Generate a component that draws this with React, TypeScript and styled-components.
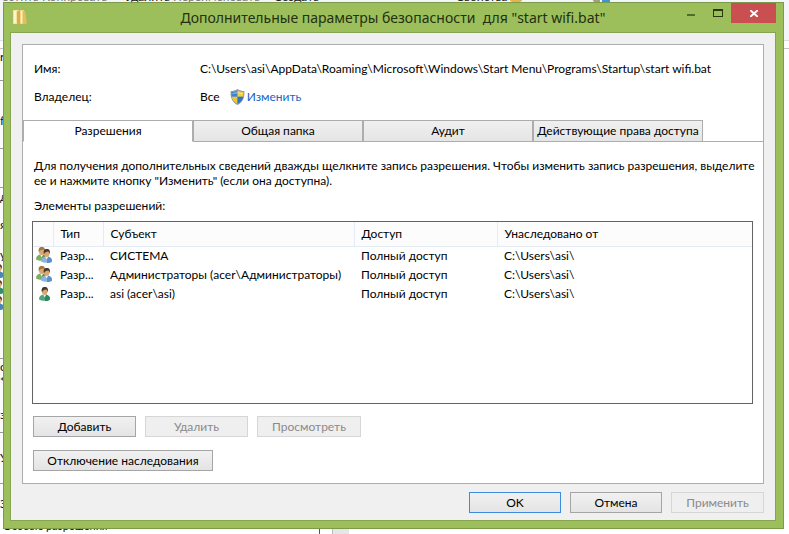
import React from 'react';
import styled, { createGlobalStyle } from 'styled-components';

const Global = createGlobalStyle`
  *, *::before, *::after { box-sizing: border-box; }
  body { margin: 0; background: #fdfdfd; font: 12px/16px "Lato", "Noto Sans", sans-serif; color: #000; overflow: hidden; }
  button, table { font: inherit; color: inherit; }
`;

const Desktop = styled.div`
  position: relative;
  height: 100vh;
  overflow: hidden;
`;

const BackTop = styled.div`
  position: absolute;
  inset: 0 0 auto 0;
  height: 49px;
  background: linear-gradient(#f4f5f8 40px, #dcdde0 40px, #dcdde0 41px, #fff 41px);
  border-bottom: 1px solid #c4c4c4;
  color: #777;
`;

const TopLabels = styled.div`
  display: grid;
  grid-template-columns: 40px 83px 48px 101px 182px 51px 85px 1fr;
  margin: -11px 0 0 2px;
  white-space: nowrap;
`;

const Dark = styled.span`color: #222;`;
const TopIcon = styled.svg`width: 24px; height: 16px;`;

const Behind = styled.div`
  position: absolute;
  inset: 49px auto 0 0;
  width: 12px;
  color: #111;
  background: #fbfbfb;
`;

const Fragment = styled.div<{ $h: number; $line?: boolean }>`
  display: flex;
  align-items: flex-end;
  height: ${p => p.$h}px;
  border-bottom: ${p => (p.$line ? '1px solid #999' : '0')};
`;

const BackBottom = styled.div`
  position: absolute;
  inset: auto 0 0 0;
  display: flex;
  align-items: flex-end;
  height: 16px;
  background: #fff;
  color: #111;
  font-size: 11px;
`;

const BottomLabel = styled.span`
  width: 320px;
  padding-left: 3px;
  border-right: 1px solid #555;
  white-space: nowrap;
`;
const BottomBar = styled.span`width: 17px; height: 12px; margin-left: 12px; background: #e6e6e6; border-left: 1px solid #bbb;`;

const Window = styled.main`
  position: relative;
  display: flex;
  flex-direction: column;
  height: calc(100vh - 7px);
  margin: 2px 5px 5px 3px;
  padding: 0 7px 7px 6px;
  background: #9cbf5b;
  border: 1px solid #7c9a4b;
`;

const TitleBar = styled.header`
  display: grid;
  grid-template-columns: 110px 1fr 110px;
  height: 29px;
  flex: none;
`;

const AppIcon = styled.svg`width: 15px; height: 17px; margin: 6px 0 0 3px;`;

const Title = styled.h1`
  margin: 0;
  font-family: "Noto Sans", sans-serif;
  font-size: 14px;
  font-weight: 400;
  line-height: 29px;
  text-align: center;
  white-space: pre;
  color: #243010;
`;

const Captions = styled.div`
  display: flex;
  justify-content: flex-end;
  align-items: flex-start;
`;

const Caption = styled.button<{ $close?: boolean }>`
  display: grid;
  place-items: center;
  width: ${p => (p.$close ? 45 : 27)}px;
  height: 20px;
  padding: 0;
  border: 0;
  background: ${p => (p.$close ? '#c94f50' : 'transparent')};
`;

const Client = styled.div`
  display: flex;
  flex-direction: column;
  flex: 1;
  padding: 11px 11px 0;
  background: #f0f0f0;
  border: 1px solid #86a553;
`;

const Sheet = styled.section`
  display: flex;
  flex-direction: column;
  flex: 1;
  min-width: 0;
  background: #fff;
  border: 1px solid #adadad;
`;

const Info = styled.dl`
  display: grid;
  grid-template-columns: 166px 1fr;
  row-gap: 12px;
  margin: 0;
  padding: 16px 10px 15px 11px;
  dt, dd { margin: 0; white-space: nowrap; }
`;

const Owner = styled.dd`display: flex; align-items: center;`;
const Shield = styled.svg`width: 15px; height: 16px; margin: 0 2px 0 10px;`;
const Link = styled.a`color: #1a66c4; text-decoration: none;`;

const Tabs = styled.div`
  display: grid;
  grid-template-columns: repeat(4, 170px) 1fr;
  height: 22px;
  &::after { content: ''; border-bottom: 1px solid #adadad; }
`;

const Tab = styled.button<{ $active?: boolean }>`
  padding: 0;
  border: 1px solid #adadad;
  border-bottom-color: ${p => (p.$active ? '#fff' : '#adadad')};
  background: ${p => (p.$active ? '#fff' : 'linear-gradient(#f0f0f0, #e5e5e5)')};
  white-space: nowrap;
`;

const Content = styled.div`
  display: flex;
  flex-direction: column;
  flex: 1;
  padding: 16px 4px 12px 9px;
`;

const Text = styled.p`margin: 0 0 10px 2px; line-height: 15px;`;
const ListLabel = styled(Text)`margin-bottom: 8px;`;

const ListBox = styled.div`
  flex: 1;
  margin-right: 6px;
  border: 1px solid #646464;
  background: #fff;
`;

const Table = styled.table`
  width: 100%;
  table-layout: fixed;
  border-collapse: collapse;
  th, td { padding: 0 0 0 7px; font-weight: 400; text-align: left; white-space: nowrap; }
  th { height: 24px; border-bottom: 1px solid #e3ecf5; border-right: 1px solid #e3ecf5; background: #fcfcfc; }
  th:last-child { border-right: 0; }
  td { height: 19px; }
  td:first-child { padding-left: 3px; }
`;

const Col = styled.col<{ $w?: number }>`width: ${p => (p.$w ? p.$w + 'px' : 'auto')};`;
const Person = styled.svg`display: block; width: 17px; height: 17px;`;

const ActionRows = styled.div`
  display: grid;
  gap: 13px;
  margin: 12px 0 0 1px;
`;
const Actions = styled.div`display: flex; gap: 9px;`;

const Button = styled.button<{ $w: number; $primary?: boolean }>`
  width: ${p => p.$w}px;
  height: 21px;
  padding: 0;
  line-height: 18px;
  border: 1px solid ${p => (p.$primary ? '#3c8bdc' : '#a5a5a5')};
  background: linear-gradient(#f1f1f1, #e4e4e4);
  white-space: nowrap;
  &:disabled { color: #8a8a8a; border-color: #d6d6d6; background: #efefef; }
`;

const Footer = styled.footer`
  display: flex;
  justify-content: flex-end;
  gap: 9px;
  padding: 8px 0 7px;
`;

type UserProps = { coat: string; shade: string; hair: string; x?: number; y?: number };

const User = ({ coat, shade, hair, x = 0, y = 0 }: UserProps) => (
  <g transform={`translate(${x} ${y})`}>
    <path d="M0 12.500C0 9.500 1.200 8 4 7.400h3c2.800.600 4 2.100 4 5.100C8 14.200 3 14.200 0 12.500z" fill={coat} />
    <path d="M6 14c2 0 4-.5 5-1.500C11 9.500 9.800 8 7 7.400L6 10z" fill={shade} />
    <path d="m4 7.200 1.700 3.300 1.600-3.300z" fill="#f4f4ea" />
    <ellipse cx="5.700" cy="4.300" rx="2.800" ry="3.700" fill="#d9a873" />
    <path d="M3 5.200C2 2 3 0 5.800 0s3.800 2 2.800 5.200C8.300 3.500 7.800 2.800 7 2.500 5.500 3 4 2.800 3 5.200z" fill={hair} />
  </g>
);

const ShieldIcon = () => (
  <Shield viewBox="0 0 15 16" aria-hidden="true">
    <path d="M7.500 0C9.500 1.500 12 2 14.300 2 15 8 13 13.500 7.500 16 2 13.500 0 8 .7 2 3 2 5.500 1.500 7.500 0z" fill="#8d9aa6" />
    <path d="M7.500 1.500v6.300H1.700Q1.500 5 1.700 3 5 3 7.500 1.500z" fill="#3c86c8" />
    <path d="M7.500 1.500v6.300h5.800q.2-2.800 0-4.800Q10 3 7.500 1.500z" fill="#f3cf45" />
    <path d="M1.700 7.800h5.800v6.900Q2.500 12.500 1.700 7.800z" fill="#f0c53c" />
    <path d="M13.300 7.800H7.500v6.900q5-2.200 5.800-6.900z" fill="#2f78bd" />
    <path d="M2.500 4q2.500 0 4.500-1.200v1.400Q5 5 2.500 5zM8 3q2 1 4.500 1v1Q10 5 8 4z" fill="#fff" opacity=".45" />
  </Shield>
);

const rows = [
  { group: true, name: 'СИСТЕМА' },
  { group: true, name: 'Администраторы (acer\\Администраторы)' },
  { group: false, name: 'asi (acer\\asi)' },
];

const fragments: { h: number; text?: string; line?: boolean }[] = [
  { h: 16, text: 'r' }, { h: 16, line: true }, { h: 48, text: 'fi' }, { h: 20, line: true },
  { h: 39, line: true }, { h: 17, text: 'д' }, { h: 28, text: 'я' }, { h: 30, text: 'у' },
];

const lowerFragments: { h: number; text?: string; line?: boolean }[] = [
  { h: 44, line: true }, { h: 16, text: 'о' }, { h: 15, text: '*' }, { h: 33, text: 'з' },
  { h: 10, line: true }, { h: 33, text: 'У' }, { h: 18, line: true }, { h: 28, text: 'З' },
];

export default function App() {
  return (
    <Desktop>
      <Global />
      <BackTop>
        <TopLabels>
          <span>естить</span><span>Копировать</span><Dark>Удалить</Dark><span>Переименовать</span>
          <Dark>Создать</Dark><Dark>Свойства</Dark>
          <TopIcon viewBox="0 0 24 16"><path d="M3 8h12v4q-6 3-12 0z" fill="#e2b450" /></TopIcon>
          <TopIcon viewBox="0 0 24 16"><path d="M0 10h8v3H2z" fill="#a8a07a" /><path d="M10 5h8v8h-8z" fill="#3a95e0" /></TopIcon>
        </TopLabels>
      </BackTop>
      <Behind>
        {fragments.map((f, i) => <Fragment key={i} $h={f.h} $line={f.line}>{f.text}</Fragment>)}
        <svg width="12" height="48" aria-hidden="true">
          {[0, 16, 32].map((y, i) => (
            <User key={y} x={-7} y={y + 1} coat="#5c97c4" shade={i === 1 ? '#2f8f68' : '#4b86ba'} hair="#5a3a24" />
          ))}
        </svg>
        {lowerFragments.map((f, i) => <Fragment key={i} $h={f.h} $line={f.line}>{f.text}</Fragment>)}
      </Behind>
      <BackBottom><BottomLabel>Особые разрешения</BottomLabel><BottomBar /></BackBottom>
      <Window>
        <TitleBar>
          <AppIcon viewBox="0 0 15 17" aria-hidden="true">
            <path d="M0 1h6v14H0z" fill="#f6e3a0" />
            <path d="M4 2.500 7 1v15l-3-1z" fill="#d9ad4c" />
            <path d="M7 1h4v14H7z" fill="#f2d588" />
            <path d="M10 2h2l1.500 9v4H10z" fill="#e3bd63" />
            <path d="M1 2h2v12H1zM8 2h1v12H8z" fill="#fdf4cf" />
          </AppIcon>
          <Title>{'Дополнительные параметры безопасности  для "start wifi.bat"'}</Title>
          <Captions>
            <Caption aria-label="Свернуть"><svg width="8" height="6"><path d="M0 5h8" stroke="#526a2c" strokeWidth="2" /></svg></Caption>
            <Caption aria-label="Развернуть"><svg width="10" height="8"><path d="M0 0h10v8H0zM1 2v5h8V2z" fillRule="evenodd" fill="#2c3814" /></svg></Caption>
            <Caption $close aria-label="Закрыть"><svg width="8" height="7"><path d="m0 0 8 7M8 0 0 7" stroke="#fff" strokeWidth="2" /></svg></Caption>
          </Captions>
        </TitleBar>
        <Client>
          <Sheet>
            <Info>
              <dt>Имя:</dt>
              <dd>C:\Users\asi\AppData\Roaming\Microsoft\Windows\Start Menu\Programs\Startup\start wifi.bat</dd>
              <dt>Владелец:</dt>
              <Owner>Все <ShieldIcon /><Link href="#">Изменить</Link></Owner>
            </Info>
            <Tabs role="tablist">
              <Tab $active role="tab" aria-selected="true">Разрешения</Tab>
              <Tab role="tab">Общая папка</Tab>
              <Tab role="tab">Аудит</Tab>
              <Tab role="tab">Действующие права доступа</Tab>
            </Tabs>
            <Content>
              <Text>
                Для получения дополнительных сведений дважды щелкните запись разрешения. Чтобы изменить запись разрешения, выделите
                ее и нажмите кнопку "Изменить" (если она доступна).
              </Text>
              <ListLabel>Элементы разрешений:</ListLabel>
              <ListBox>
                <Table>
                  <colgroup><Col $w={20} /><Col $w={50} /><Col $w={251} /><Col $w={143} /><Col /></colgroup>
                  <thead><tr><th /><th>Тип</th><th>Субъект</th><th>Доступ</th><th>Унаследовано от</th></tr></thead>
                  <tbody>
                    {rows.map(r => (
                      <tr key={r.name}>
                        <td>
                          <Person viewBox="0 0 17 17" aria-hidden="true">
                            {r.group && <User coat="#7fae62" shade="#5b9450" hair="#a07a3c" />}
                            <User
                              coat={r.group ? '#8db4e0' : '#4fa67e'}
                              shade={r.group ? '#5f8fc9' : '#2f8562'}
                              hair="#4a382c"
                              x={r.group ? 5 : 3}
                              y={2}
                            />
                          </Person>
                        </td>
                        <td>Разр...</td><td>{r.name}</td><td>Полный доступ</td><td>C:\Users\asi\</td>
                      </tr>
                    ))}
                  </tbody>
                </Table>
              </ListBox>
              <ActionRows>
                <Actions><Button $w={103}>Добавить</Button><Button $w={103} disabled>Удалить</Button><Button $w={104} disabled>Просмотреть</Button></Actions>
                <Actions><Button $w={180}>Отключение наследования</Button></Actions>
              </ActionRows>
            </Content>
          </Sheet>
          <Footer><Button $w={92} $primary>OK</Button><Button $w={92}>Отмена</Button><Button $w={93} disabled>Применить</Button></Footer>
        </Client>
      </Window>
    </Desktop>
  );
}
